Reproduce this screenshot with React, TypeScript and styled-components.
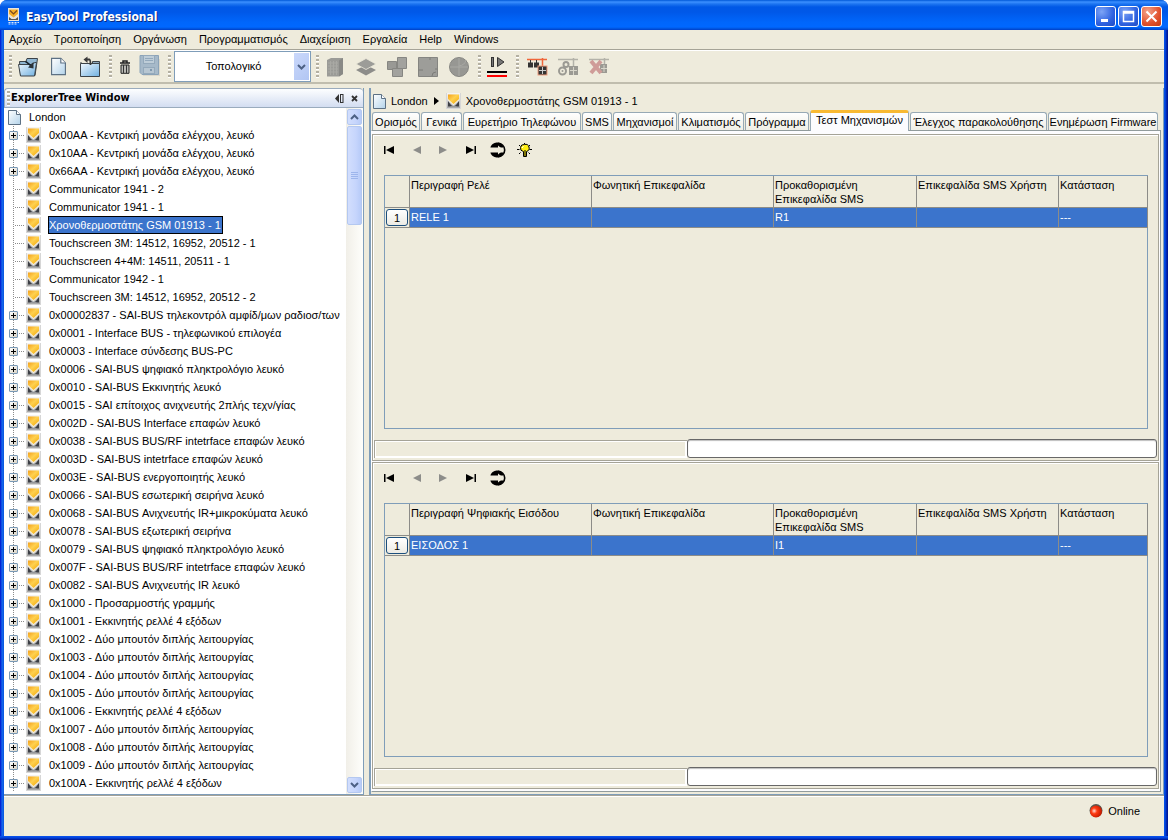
import React from "react";
import styled, { createGlobalStyle, css } from "styled-components";

const beige = "#eeebdc";
const line = "#a5a397";
const steel = "#7f9db9";
const select = "#3b74cc";

const GlobalStyle = createGlobalStyle`
  * { box-sizing: border-box; }
  body {
    margin: 0;
    background: #fff;
    color: #000;
    font: 11px/14px "Liberation Sans", Arial, sans-serif;
  }
  button, select { font: inherit; color: inherit; padding: 0; border: 0; background: none; }
  svg { display: block; flex: none; }
`;

/* ---------- window frame ---------- */

const Window = styled.div`
  height: 100vh;
  min-height: 480px;
  display: flex;
  flex-direction: column;
  border-radius: 7px 7px 0 0;
  overflow: hidden;
  background: linear-gradient(90deg, #0019cf 0, #0831d9 1px, #166aee 2px, #0855dd 4px, #0855dd calc(100% - 4px), #0148e8 calc(100% - 3px), #001ea0 calc(100% - 1px), #00138c 100%);
`;

const TitleBar = styled.header`
  height: 30px;
  flex: none;
  display: flex;
  align-items: center;
  gap: 6px;
  padding: 3px 6px 0 7px;
  background: linear-gradient(180deg, #0058d8 0, #3c90ff 2px, #1c74f0 4px, #0058e6 7px, #0058e8 12px, #0066fb 22px, #0068ff 27px, #0050d8 29px, #003dc8 30px);
`;

const Title = styled.h1`
  margin: 0;
  flex: 1;
  font: bold 12px/20px "DejaVu Sans Condensed", sans-serif;
  color: #fff;
  text-shadow: 1px 1px 0 #0a2a80;
`;

const CaptionButtons = styled.div`
  display: flex;
  gap: 2px;
`;

const CaptionButton = styled.button<{ $close?: boolean }>`
  width: 21px;
  height: 21px;
  border: 1px solid #fff;
  border-radius: 3px;
  display: grid;
  place-items: center;
  background: ${(p) =>
    p.$close
      ? "radial-gradient(circle at 30% 25%, #f2a48c, #e2512c 60%, #c43c14)"
      : "radial-gradient(circle at 30% 25%, #7da4f6, #2f62e0 60%, #1f4bc4)"};
`;

const Client = styled.div`
  flex: 1;
  min-height: 0;
  margin: 0 4px;
  display: flex;
  flex-direction: column;
  background: ${beige};
`;

const FrameBottom = styled.div`
  height: 4px;
  flex: none;
  background: linear-gradient(180deg, #0a55f0, #0040d8 50%, #00138c);
`;

/* ---------- menu and toolbar ---------- */

const MenuBar = styled.nav`
  height: 20px;
  flex: none;
  display: flex;
  align-items: center;
  gap: 12px;
  padding: 0 0 2px 5px;
  border-bottom: 1px solid ${line};
`;

const MenuItem = styled.button`
  line-height: 16px;
  white-space: nowrap;
`;

const ToolBar = styled.div`
  height: 34px;
  flex: none;
  display: flex;
  align-items: center;
  padding-left: 1px;
  border-top: 1px solid #fff;
  border-bottom: 2px solid #c0bdae;
`;

const Grip = styled.span`
  width: 3px;
  height: 23px;
  flex: none;
  margin-left: 4px;
  background: repeating-linear-gradient(180deg, #b4b0a2 0, #b4b0a2 2px, #fff 2px, #fff 3px, transparent 3px, transparent 4px);
`;

const ToolButton = styled.button<{ $narrow?: boolean }>`
  width: ${(p) => (p.$narrow ? 25 : 31)}px;
  height: 30px;
  display: grid;
  place-items: center;
`;

const Spacer = styled.span`
  width: 2px;
`;

const Combo = styled.div`
  position: relative;
  width: 137px;
  height: 31px;
  margin: 0 1px 0 3px;

  select {
    width: 100%;
    height: 100%;
    appearance: none;
    padding: 0 18px 2px 0;
    text-align: center;
    text-align-last: center;
    background: #fff;
    border: 1px solid ${steel};
  }
`;

const ComboArrow = styled.span`
  position: absolute;
  inset: 2px 2px 2px auto;
  width: 15px;
  display: grid;
  place-items: center;
  pointer-events: none;
  background: linear-gradient(135deg, #cad8fb, #b2c6f3);
`;

/* ---------- explorer ---------- */

const Body = styled.div`
  flex: 1;
  min-height: 0;
  display: flex;
  gap: 5px;
  padding-top: 4px;
`;

const Explorer = styled.aside`
  width: 360px;
  flex: none;
  display: flex;
  flex-direction: column;
  border: solid ${steel};
  border-width: 0 1px 1px 0;
`;

const ExplorerHeader = styled.div`
  height: 20px;
  flex: none;
  display: flex;
  align-items: center;
  padding: 0 1px 0 2px;
  border: solid #9aabbd;
  border-width: 1px 0 1px 1px;
  border-radius: 4px 4px 0 0;
  background: linear-gradient(180deg, #fdfeff, #d3ddf1);
`;

const HeaderGrip = styled(Grip)`
  height: 15px;
  margin: 0 1px 0 0;
`;

const ExplorerTitle = styled.h2`
  margin: 0;
  flex: 1;
  font: bold 11px/14px "DejaVu Sans Condensed", sans-serif;
`;

const HeaderButton = styled.button`
  width: 15px;
  height: 16px;
  display: grid;
  place-items: center;
`;

const TreeArea = styled.div`
  flex: 1;
  min-height: 0;
  display: flex;
  background: #fff;
`;

const Tree = styled.ul`
  flex: 1;
  min-width: 0;
  margin: 0;
  padding: 0;
  list-style: none;
  overflow: hidden;
`;

const RootRow = styled.li`
  height: 18px;
  display: flex;
  align-items: center;
  gap: 8px;
  padding-left: 4px;
`;

const TreeRow = styled.li`
  height: 18px;
  display: flex;
  align-items: center;
  padding-left: 5px;
  background: repeating-linear-gradient(180deg, #8c8c8c 0 1px, transparent 1px 2px) 9px 0 / 1px 100% no-repeat;
`;

const Expander = styled.button`
  width: 9px;
  height: 9px;
  flex: none;
  border: 1px solid #7898b5;
  border-radius: 1px;
  background:
    linear-gradient(#000, #000) center / 5px 1px no-repeat,
    linear-gradient(#000, #000) center / 1px 5px no-repeat,
    linear-gradient(135deg, #fff, #d8d2c4);
`;

const Branch = styled.span<{ $long?: boolean }>`
  width: ${(p) => (p.$long ? 10 : 6)}px;
  margin-left: ${(p) => (p.$long ? 5 : 0)}px;
  margin-right: 2px;
  height: 1px;
  flex: none;
  background: repeating-linear-gradient(90deg, transparent 0 1px, #8c8c8c 1px 2px);
`;

const NodeLabel = styled.span<{ $selected?: boolean }>`
  margin-left: 7px;
  padding: 1px 1px 1px 0;
  border: 1px solid transparent;
  white-space: nowrap;
  ${(p) =>
    p.$selected &&
    css`
      color: #fff;
      background: ${select};
      border-color: #000;
    `}
`;

const ScrollBar = styled.div`
  width: 17px;
  flex: none;
  display: flex;
  flex-direction: column;
  gap: 1px;
  padding: 1px;
  background: linear-gradient(90deg, #f1efe8, #fefefb);
`;

const ScrollPart = styled.button<{ $thumb?: boolean }>`
  height: ${(p) => (p.$thumb ? 99 : 16)}px;
  flex: none;
  display: grid;
  place-items: center;
  border: 1px solid #b4c8f0;
  border-radius: 2px;
  background: linear-gradient(90deg, #d2defd, #c6d5fc 60%, #b7cbf8);
`;

const ScrollTrack = styled.div`
  flex: 1;
`;

/* ---------- detail area ---------- */

const Detail = styled.main`
  flex: 1;
  min-width: 0;
  display: flex;
  flex-direction: column;
  padding: 4px 2px 2px 0;
  border: solid ${steel};
  border-width: 0 1px 1px 2px;
`;

const Breadcrumb = styled.div`
  height: 18px;
  flex: none;
  display: flex;
  align-items: center;
  gap: 5px;
  padding-left: 2px;
`;

const CrumbArrow = styled.span`
  width: 8px;
  display: grid;
  place-items: center;
`;

const Tabs = styled.div`
  height: 20px;
  flex: none;
  display: grid;
  grid-template-columns: 48fr 41fr 118fr 30fr 64fr 66fr 64fr 99fr 137fr 110fr;
  column-gap: 1px;
  align-items: end;
  padding: 0 3px 0 1px;
`;

const Tab = styled.button<{ $active?: boolean }>`
  height: 18px;
  min-width: 0;
  white-space: nowrap;
  display: flex;
  justify-content: center;
  align-items: center;
  border: 1px solid #97a9b5;
  border-bottom: 0;
  border-radius: 3px 3px 0 0;
  background: linear-gradient(180deg, #fff, #f1f0e8 90%);
  ${(p) =>
    p.$active &&
    css`
      height: 21px;
      margin-bottom: -1px;
      align-items: flex-start;
      border-top: 3px solid #f8b932;
      background: #fcfcfe;
      z-index: 1;
    `}
`;

const TabPane = styled.div`
  flex: 1;
  min-height: 0;
  display: flex;
  flex-direction: column;
  gap: 1px;
  padding: 3px 1px 2px 0;
  border: 1px solid #919b9c;
  border-left-color: #fff;
  background: #fcfcfe;
`;

const Panel = styled.section`
  flex: 1;
  min-height: 0;
  display: flex;
  flex-direction: column;
  padding: 0 1px 2px 1px;
  border: 1px solid ${line};
  background: ${beige};
  box-shadow: inset 1px 1px 0 #fff;
`;

const NavBar = styled.div`
  height: 31px;
  flex: none;
  display: flex;
  align-items: center;
  padding: 0 0 1px 2px;
`;

const NavButton = styled.button`
  width: 27px;
  height: 24px;
  display: grid;
  place-items: center;
`;

const GridFrame = styled.div`
  flex: 1;
  min-height: 0;
  margin: 9px 9px 10px 10px;
  border: 1px solid ${steel};
`;

const Grid = styled.table`
  width: 100%;
  table-layout: fixed;
  border-spacing: 0;

  th, td {
    border: solid #8c8c88;
    border-width: 0 1px 1px 0;
    text-align: left;
    vertical-align: top;
    font-weight: normal;
    overflow: hidden;
  }
  th { height: 32px; padding: 2px 1px 1px; }
  td { height: 20px; padding: 2px 1px; color: #fff; background: ${select}; }
`;

const NumberCell = styled.th`
  && { height: 20px; padding: 0 1px; }
`;

const RowButton = styled.button`
  display: block;
  width: 22px;
  height: 17px;
  margin-top: 1px;
  border: 1px solid #1d4f7d;
  border-radius: 3px;
  background: linear-gradient(180deg, #fff, #ecebe4);
`;

const Strip = styled.div`
  height: 19px;
  flex: none;
  display: flex;
`;

const Message = styled.div`
  flex: 2;
  margin: 1px 0 0 0;
  border: 1px solid ${line};
  border-right: 0;
  border-bottom: 0;
  box-shadow: inset 1px 1px 0 #fff, inset -2px -2px 0 #fff;
`;

const Progress = styled.div`
  flex: 3;
  border: 1px solid #686868;
  border-radius: 3px;
  background: #fff;
  box-shadow: inset 0 1px 1px #bebebe;
`;

const StatusBar = styled.footer`
  height: 41px;
  flex: none;
  display: flex;
  justify-content: flex-end;
  gap: 5px;
  padding: 8px 24px 0 0;
  border-top: 1px solid ${line};
  box-shadow: inset 0 1px 0 #fff;
`;

/* ---------- icons ---------- */

const Defs = styled.svg`
  position: absolute;
`;

const SharedGradients = () => (
  <Defs width="0" height="0" aria-hidden="true">
    <defs>
      <linearGradient id="steelFace" x1="0" y1="0" x2="0" y2="1">
        <stop offset="0" stopColor="#f6f6f6" />
        <stop offset="1" stopColor="#a6a6a6" />
      </linearGradient>
      <linearGradient id="amber" x1="0" y1="0" x2="1" y2="1">
        <stop offset="0" stopColor="#f3a01c" />
        <stop offset=".45" stopColor="#ffd150" />
        <stop offset="1" stopColor="#f2a400" />
      </linearGradient>
      <linearGradient id="paper" x1="0" y1="0" x2="1" y2="1">
        <stop offset="0" stopColor="#ffffff" />
        <stop offset="1" stopColor="#b3d3ea" />
      </linearGradient>
      <linearGradient id="folder" x1="0" y1="0" x2="1" y2="1">
        <stop offset="0" stopColor="#f2f9ff" />
        <stop offset="1" stopColor="#6fb0e0" />
      </linearGradient>
      <radialGradient id="redBall" cx=".35" cy=".45" r=".6">
        <stop offset="0" stopColor="#ffe0d8" />
        <stop offset=".4" stopColor="#ff3c14" />
        <stop offset="1" stopColor="#c81c00" />
      </radialGradient>
    </defs>
  </Defs>
);

const DeviceIcon = () => (
  <svg width="15" height="16" viewBox="0 0 15 16">
    <rect width="15" height="16" fill="#d6d6d6" />
    <rect x="1" width="13" height="15" fill="url(#steelFace)" />
    <path d="M2 8 5 12H10L13 8V13.500H2Z" fill="#3c3e44" />
    <path d="M4 13.500 7.500 11.500 11 13.500Z" fill="#b4b6ba" />
    <path d="M1.500 1H13.500V7L7.500 12.500 1.500 7Z" fill="#f3eee2" />
    <path d="M2 1.500H13V6L7.500 11 2 6Z" fill="url(#amber)" />
  </svg>
);

const PageIcon = ({ w = 13, h = 15 }: { w?: number; h?: number }) => (
  <svg width={w} height={h} viewBox="0 0 13 15">
    <path d="M.5 .5H8.500L12.500 4.500V14.500H.5Z" fill="url(#paper)" stroke="#5d7184" />
    <path d="M8.500 .5V4.500H12.500" fill="#fff" stroke="#5d7184" />
  </svg>
);

const AppIcon = () => (
  <svg width="13" height="17" viewBox="0 0 13 17">
    <rect x="1" y="0" width="11" height="13" fill="#e8e4dc" />
    <path d="M2 2.500V1.500H11V6L6.500 9.500 2 6Z" fill="#f6b02a" />
    <path d="M3 2.500 6.500 6 10 2.500" fill="none" stroke="#7a4a20" strokeWidth="1.200" />
    <path d="M2 12V9L4.500 11H8.500L11 9V12Z" fill="#555" />
    <path d="M1.500 14.500H12M1.500 16H10" stroke="#dfe8fa" strokeWidth="1.200" strokeDasharray="2 1" />
  </svg>
);

const FolderOpenIcon = () => (
  <svg width="22" height="22" viewBox="0 0 22 22">
    <path d="M2.500 5.500H9L10 2.500H20.500L18 19.500H3.500Z" fill="#8fb6d2" stroke="#3c4348" />
    <path d="M1.500 8.500H14L18 6.500H19.500L17.500 20H3.500Z" fill="url(#folder)" stroke="#3c4348" />
    <path d="M8.500 5.500C11 7 12 8.500 14 9.500" fill="none" stroke="#18242e" strokeWidth="1.600" />
    <path d="M16.500 6V12.500L11 11.500Z" fill="#2b3338" />
  </svg>
);

const FolderMoveIcon = () => (
  <svg width="22" height="22" viewBox="0 0 22 22">
    <path d="M13.500 7.500V5.500H20.500V9H13.500Z" fill="#8fa9bc" stroke="#3c4348" />
    <path d="M1.500 7.500H20.500V20.500H1.500Z" fill="url(#folder)" stroke="#3c4348" />
    <path d="M2 7.500V6" stroke="#3c4348" />
    <path d="M7 3.500H10.500Q11.500 4 11.500 9" fill="none" stroke="#3a3a3a" strokeWidth="1.800" />
    <path d="M8.500 .5V7L4.500 3.500Z" fill="#3a3a3a" />
  </svg>
);

const TrashIcon = () => (
  <svg width="12" height="14" viewBox="0 0 12 14">
    <path d="M1 3H11M4 2.500V1H8V2.500" fill="none" stroke="#222" strokeWidth="1.500" />
    <path d="M2 5H10V13.300H2Z" fill="#b9b9b4" stroke="#222" />
    <path d="M4.500 5V13M7.500 5V13" stroke="#333" />
  </svg>
);

const FloppyIcon = () => (
  <svg width="22" height="24" viewBox="0 0 22 24">
    <rect x="4" y="4" width="17" height="17" fill="#dbd8cc" />
    <path d="M1 .5H19.500V19.500H3L1 17.500Z" fill="#a6b9c9" stroke="#8ba3b8" />
    <rect x="4.500" y=".5" width="11" height="8" fill="#becdd8" stroke="#94a9bb" />
    <path d="M6 3.500H14M6 5.500H14" stroke="#93a9bc" />
    <rect x="4.500" y="12.500" width="11" height="6" fill="#b7c6d2" stroke="#94a9bb" />
    <rect x="11" y="14" width="2" height="2" fill="#7f98ae" />
  </svg>
);

const BuildingIcon = () => (
  <svg width="18" height="20" viewBox="0 0 18 20">
    <path d="M1 3 5 1H17V17L13 19.500H1Z" fill="#9b9b97" />
    <path d="M13 3.500 17 1V17L13 19.500Z" fill="#898986" />
    <path d="M2 6H12M2 9H12M2 12H12M2 15H12M4.500 4V18M7.500 4V18M10.500 4V18" stroke="#a9a9a4" />
  </svg>
);

const LayersIcon = () => (
  <svg width="20" height="18" viewBox="0 0 20 18">
    <path d="M10 7 20 12 10 17.500 0 12Z" fill="#8d8d8a" />
    <path d="M10 .5 20 6 10 11.500 0 6Z" fill="#9c9c98" stroke="#eeebdc" strokeWidth=".8" />
  </svg>
);

const BlocksIcon = () => (
  <svg width="20" height="20" viewBox="0 0 20 20">
    <path d="M.5 4.500H9.500V12.500H.5Z" fill="#999995" stroke="#868682" />
    <path d="M10.500 .5H19.500V11.500H10.500Z" fill="#a2a29e" stroke="#868682" />
    <path d="M5.500 11.500H15.500V19.500H5.500Z" fill="#a2a29e" stroke="#868682" />
  </svg>
);

const PlanIcon = () => (
  <svg width="20" height="20" viewBox="0 0 20 20">
    <path d="M.5 .5H19.500V19.500H.5Z" fill="#9d9d99" stroke="#858581" />
    <path d="M12 .5V3M.5 13H5M17 12H19.500M14 19Q14 15 18 15" fill="none" stroke="#7c7c78" />
  </svg>
);

const GlobeIcon = () => (
  <svg width="20" height="20" viewBox="0 0 20 20">
    <circle cx="10" cy="10" r="9.500" fill="#979793" stroke="#868682" />
    <path d="M10 1V19M1 10H19M10 9Q16 8 17 3" fill="none" stroke="#a9a9a4" />
  </svg>
);

const RunIcon = () => (
  <svg width="22" height="22" viewBox="0 0 22 22">
    <rect x="5.500" y="1.500" width="2" height="9" fill="#777" stroke="#333" />
    <path d="M11.500 1.500 18 6 11.500 10.500Z" fill="#777" stroke="#333" />
    <rect x="1" y="15" width="20" height="2" fill="#000" />
    <rect x="1" y="19" width="20" height="2" fill="#f00" />
  </svg>
);

const NetIcon = () => (
  <svg width="22" height="20" viewBox="0 0 22 20">
    <path d="M1 2.500H21M16.500 1V10" stroke="#f0663a" strokeWidth="1.500" />
    <path d="M4.500 3V7M10.500 3V7" stroke="#333" />
    <rect x="2" y="5.500" width="5" height="5" fill="#333" />
    <rect x="8" y="5.500" width="5" height="5" fill="#333" />
    <rect x="12" y="9" width="9" height="9" fill="#333" stroke="#f0a080" />
    <path d="M16.500 10V17M13 13.500H20" stroke="#ccc" />
  </svg>
);

const NetConfigIcon = () => (
  <svg width="22" height="20" viewBox="0 0 22 20">
    <path d="M1 2.500H21M16.500 1V10" stroke="#b3b2a9" strokeWidth="1.500" />
    <circle cx="9" cy="7.500" r="2.500" fill="none" stroke="#9b9a93" strokeWidth="2" />
    <circle cx="5.500" cy="14" r="3.500" fill="none" stroke="#9b9a93" strokeWidth="2" />
    <circle cx="5.500" cy="14" r="1" fill="#9b9a93" />
    <rect x="12" y="9" width="9" height="9" fill="#9b9a93" />
    <path d="M16.500 10V18M13 13.500H20" stroke="#d8d6ca" />
  </svg>
);

const NetRemoveIcon = () => (
  <svg width="22" height="20" viewBox="0 0 22 20">
    <path d="M1 2.500H21M16.500 1V10" stroke="#b3b2a9" strokeWidth="1.500" />
    <rect x="12" y="7" width="7" height="9" fill="#9b9a93" />
    <path d="M16 8V15M13 11.500H19" stroke="#d8d6ca" />
    <path d="M3 4 13 16M13 4 3 16" stroke="#cf9c98" strokeWidth="4" />
  </svg>
);

const Chevron = ({ up }: { up?: boolean }) => (
  <svg width="9" height="6" viewBox="0 0 9 6">
    <path d={up ? "M1 5 4.500 1.500 8 5" : "M1 1 4.500 4.500 8 1"} fill="none" stroke="#4d6185" strokeWidth="2" />
  </svg>
);

const ThumbLines = () => (
  <svg width="7" height="8" viewBox="0 0 7 8">
    <path d="M0 .5H7M0 2.500H7M0 4.500H7M0 6.500H7" stroke="#9db5ec" />
  </svg>
);

const StepIcon = ({ kind }: { kind: "first" | "prev" | "next" | "last" }) => {
  const muted = kind === "prev" || kind === "next";
  const fill = muted ? "#8d8d8a" : "#000";
  const left = kind === "first" || kind === "prev";
  return (
    <svg width="11" height="8" viewBox="0 0 11 8">
      <path d={left ? "M10 0V8L2 4Z" : "M1 0V8L9 4Z"} fill={fill} />
      {!muted && <rect x={left ? 0 : 9.500} y="0" width="1.500" height="8" fill={fill} />}
    </svg>
  );
};

/* Two solid caps joined on the right by a thin ring, with an arrow-shaped gap between them. */
const RefreshIcon = () => (
  <svg width="16" height="16" viewBox="0 0 16 16">
    <path d="M.5 5C2 1.500 5 .5 7.500 .5S12 2 13 4V5.500H.5Z" fill="#000" />
    <path d="M.5 11C2 14.500 5 15.500 7.500 15.500S12 14 13 12V10.500H.5Z" fill="#000" />
    <path d="M8 1.300A6.700 6.700 0 0 1 8 14.700" fill="none" stroke="#000" strokeWidth="1.600" />
    <path d="M0 6H8V3.500L13.500 8 8 12.500V10H0Z" fill="#eeebdc" />
  </svg>
);

const BulbIcon = () => (
  <svg width="15" height="15" viewBox="0 0 15 15">
    <path d="M7.500 0V1M2 2 3.500 3.500M13 2 11.500 3.500M0 6.500H2.500M15 6.500H12.500M2 11 3.500 9.500M13 11 11.500 9.500" stroke="#000" />
    <path d="M7.500 1.500A3.500 3.500 0 0 1 9.500 8.500V13.500H6.500V8.500A3.500 3.500 0 0 1 7.500 1.500Z" fill="#ffee10" stroke="#000" />
    <path d="M6.500 3 5 5" stroke="#fff" />
    <path d="M8 7V11M6.500 12H9.500" stroke="#000" />
  </svg>
);

/* ---------- data ---------- */

const menus = ["Αρχείο", "Τροποποίηση", "Οργάνωση", "Προγραμματισμός", "Διαχείριση", "Εργαλεία", "Help", "Windows"];

const tabs = [
  "Ορισμός", "Γενικά", "Ευρετήριο Τηλεφώνου", "SMS", "Μηχανισμοί", "Κλιματισμός",
  "Πρόγραμμα", "Τεστ Μηχανισμών", "Έλεγχος παρακολούθησης", "Ενημέρωση Firmware",
];

const current = "Χρονοθερμοστάτης GSM 01913 - 1";

const nodes: { label: string; leaf?: boolean }[] = [
  { label: "0x00AA - Κεντρική μονάδα ελέγχου, λευκό" },
  { label: "0x10AA - Κεντρική μονάδα ελέγχου, λευκό" },
  { label: "0x66AA - Κεντρική μονάδα ελέγχου, λευκό" },
  { label: "Communicator 1941 - 2", leaf: true },
  { label: "Communicator 1941 - 1", leaf: true },
  { label: current, leaf: true },
  { label: "Touchscreen 3M: 14512, 16952, 20512 - 1", leaf: true },
  { label: "Touchscreen 4+4M: 14511, 20511 - 1", leaf: true },
  { label: "Communicator 1942 - 1", leaf: true },
  { label: "Touchscreen 3M: 14512, 16952, 20512 - 2", leaf: true },
  { label: "0x00002837 - SAI-BUS τηλεκοντρόλ αμφίδ/μων ραδιοσ/των" },
  { label: "0x0001 - Interface BUS - τηλεφωνικού επιλογέα" },
  { label: "0x0003 - Interface σύνδεσης BUS-PC" },
  { label: "0x0006 - SAI-BUS ψηφιακό πληκτρολόγιο λευκό" },
  { label: "0x0010 - SAI-BUS Εκκινητής λευκό" },
  { label: "0x0015 - SAI επίτοιχος ανιχνευτής 2πλής τεχν/γίας" },
  { label: "0x002D - SAI-BUS Interface επαφών λευκό" },
  { label: "0x0038 - SAI-BUS BUS/RF intetrface επαφών λευκό" },
  { label: "0x003D - SAI-BUS intetrface επαφών λευκό" },
  { label: "0x003E - SAI-BUS ενεργοποιητής λευκό" },
  { label: "0x0066 - SAI-BUS εσωτερική σειρήνα λευκό" },
  { label: "0x0068 - SAI-BUS Ανιχνευτής IR+μικροκύματα λευκό" },
  { label: "0x0078 - SAI-BUS εξωτερική σειρήνα" },
  { label: "0x0079 - SAI-BUS ψηφιακό πληκτρολόγιο λευκό" },
  { label: "0x007F - SAI-BUS BUS/RF intetrface επαφών λευκό" },
  { label: "0x0082 - SAI-BUS Ανιχνευτής IR λευκό" },
  { label: "0x1000 - Προσαρμοστής γραμμής" },
  { label: "0x1001 - Εκκινητής ρελλέ 4 εξόδων" },
  { label: "0x1002 - Δύο μπουτόν διπλής λειτουργίας" },
  { label: "0x1003 - Δύο μπουτόν διπλής λειτουργίας" },
  { label: "0x1004 - Δύο μπουτόν διπλής λειτουργίας" },
  { label: "0x1005 - Δύο μπουτόν διπλής λειτουργίας" },
  { label: "0x1006 - Εκκινητής ρελλέ 4 εξόδων" },
  { label: "0x1007 - Δύο μπουτόν διπλής λειτουργίας" },
  { label: "0x1008 - Δύο μπουτόν διπλής λειτουργίας" },
  { label: "0x1009 - Δύο μπουτόν διπλής λειτουργίας" },
  { label: "0x100A - Εκκινητής ρελλέ 4 εξόδων" },
];

const TestPanel = ({ title, name, code, lamp }: { title: string; name: string; code: string; lamp?: boolean }) => (
  <Panel aria-label={title}>
    <NavBar>
      <NavButton aria-label="First"><StepIcon kind="first" /></NavButton>
      <NavButton aria-label="Previous"><StepIcon kind="prev" /></NavButton>
      <NavButton aria-label="Next"><StepIcon kind="next" /></NavButton>
      <NavButton aria-label="Last"><StepIcon kind="last" /></NavButton>
      <NavButton aria-label="Refresh"><RefreshIcon /></NavButton>
      {lamp && <NavButton aria-label="Test"><BulbIcon /></NavButton>}
    </NavBar>
    <GridFrame>
      <Grid>
        <colgroup>
          <col style={{ width: 25 }} />
          <col style={{ width: 182 }} />
          <col style={{ width: 182 }} />
          <col style={{ width: 143 }} />
          <col style={{ width: 142 }} />
          <col style={{ width: 89 }} />
        </colgroup>
        <thead>
          <tr>
            <th aria-label="Row" />
            <th scope="col">{title}</th>
            <th scope="col">Φωνητική Επικεφαλίδα</th>
            <th scope="col">Προκαθορισμένη Επικεφαλίδα SMS</th>
            <th scope="col">Επικεφαλίδα SMS Χρήστη</th>
            <th scope="col">Κατάσταση</th>
          </tr>
        </thead>
        <tbody>
          <tr>
            <NumberCell scope="row"><RowButton>1</RowButton></NumberCell>
            <td>{name}</td>
            <td />
            <td>{code}</td>
            <td />
            <td>---</td>
          </tr>
        </tbody>
      </Grid>
    </GridFrame>
    <Strip>
      <Message role="status" />
      <Progress role="progressbar" aria-label={title} aria-valuenow={0} />
    </Strip>
  </Panel>
);

export default function App() {
  return (
    <>
      <GlobalStyle />
      <SharedGradients />
      <Window>
        <TitleBar>
          <AppIcon />
          <Title>EasyTool Professional</Title>
          <CaptionButtons>
            <CaptionButton aria-label="Minimize">
              <svg width="13" height="13" viewBox="0 0 13 13"><rect x="2" y="9" width="7" height="3" fill="#fff" /></svg>
            </CaptionButton>
            <CaptionButton aria-label="Maximize">
              <svg width="13" height="13" viewBox="0 0 13 13"><path d="M1.500 1.500H11.500V11.500H1.500ZM1 3H12" fill="none" stroke="#fff" strokeWidth="1.500" /></svg>
            </CaptionButton>
            <CaptionButton $close aria-label="Close">
              <svg width="13" height="13" viewBox="0 0 13 13"><path d="M1.500 1.500 11.500 11.500M11.500 1.500 1.500 11.500" stroke="#fff" strokeWidth="2" /></svg>
            </CaptionButton>
          </CaptionButtons>
        </TitleBar>

        <Client>
          <MenuBar>
            {menus.map((m) => <MenuItem key={m}>{m}</MenuItem>)}
          </MenuBar>

          <ToolBar>
            <Grip />
            <ToolButton aria-label="Open project"><FolderOpenIcon /></ToolButton>
            <ToolButton aria-label="New"><PageIcon w={15} h={19} /></ToolButton>
            <ToolButton aria-label="Import"><FolderMoveIcon /></ToolButton>
            <Grip />
            <ToolButton $narrow aria-label="Delete"><TrashIcon /></ToolButton>
            <ToolButton $narrow aria-label="Save"><FloppyIcon /></ToolButton>
            <Spacer />
            <Grip />
            <Combo>
              <select aria-label="Προβολή" defaultValue="Τοπολογικό">
                <option>Τοπολογικό</option>
              </select>
              <ComboArrow><Chevron /></ComboArrow>
            </Combo>
            <Grip />
            <ToolButton aria-label="Building"><BuildingIcon /></ToolButton>
            <ToolButton aria-label="Floors"><LayersIcon /></ToolButton>
            <ToolButton aria-label="Areas"><BlocksIcon /></ToolButton>
            <ToolButton aria-label="Plan"><PlanIcon /></ToolButton>
            <ToolButton aria-label="Global"><GlobeIcon /></ToolButton>
            <Grip />
            <ToolButton aria-label="Run"><RunIcon /></ToolButton>
            <Grip />
            <Spacer />
            <ToolButton aria-label="Network"><NetIcon /></ToolButton>
            <ToolButton aria-label="Configure network"><NetConfigIcon /></ToolButton>
            <ToolButton aria-label="Remove network"><NetRemoveIcon /></ToolButton>
          </ToolBar>

          <Body>
            <Explorer>
              <ExplorerHeader>
                <HeaderGrip />
                <ExplorerTitle>ExplorerTree Window</ExplorerTitle>
                <HeaderButton aria-label="Auto hide">
                  <svg width="9" height="9" viewBox="0 0 9 9"><path d="M4 0V9L0 4.500Z" fill="#333" /><rect x="5.500" y=".5" width="2.500" height="8" fill="none" stroke="#333" /></svg>
                </HeaderButton>
                <HeaderButton aria-label="Close panel">
                  <svg width="7" height="7" viewBox="0 0 7 7"><path d="M1 1 6 6M6 1 1 6" stroke="#333" strokeWidth="1.800" /></svg>
                </HeaderButton>
              </ExplorerHeader>
              <TreeArea>
                <Tree role="tree">
                  <RootRow role="treeitem"><PageIcon />London</RootRow>
                  {nodes.map((n) => (
                    <TreeRow key={n.label} role="treeitem" aria-selected={n.label === current}>
                      {!n.leaf && <Expander aria-label="Expand" />}
                      <Branch $long={n.leaf} />
                      <DeviceIcon />
                      <NodeLabel $selected={n.label === current}>{n.label}</NodeLabel>
                    </TreeRow>
                  ))}
                </Tree>
                <ScrollBar>
                  <ScrollPart aria-label="Scroll up"><Chevron up /></ScrollPart>
                  <ScrollPart $thumb aria-label="Scroll position"><ThumbLines /></ScrollPart>
                  <ScrollTrack />
                  <ScrollPart aria-label="Scroll down"><Chevron /></ScrollPart>
                </ScrollBar>
              </TreeArea>
            </Explorer>

            <Detail>
              <Breadcrumb>
                <PageIcon />
                <span>London</span>
                <CrumbArrow><svg width="5" height="8" viewBox="0 0 5 8"><path d="M0 0V8L5 4Z" /></svg></CrumbArrow>
                <DeviceIcon />
                <span>{current}</span>
              </Breadcrumb>
              <Tabs role="tablist">
                {tabs.map((t) => (
                  <Tab key={t} role="tab" aria-selected={t === "Τεστ Μηχανισμών"} $active={t === "Τεστ Μηχανισμών"}>{t}</Tab>
                ))}
              </Tabs>
              <TabPane role="tabpanel">
                <TestPanel title="Περιγραφή Ρελέ" name="RELE 1" code="R1" lamp />
                <TestPanel title="Περιγραφή Ψηφιακής Εισόδου" name="ΕΙΣΟΔΟΣ 1" code="I1" />
              </TabPane>
            </Detail>
          </Body>

          <StatusBar>
            <svg width="14" height="14" viewBox="0 0 14 14">
              <circle cx="7" cy="6.500" r="6.500" fill="#5a5850" />
              <circle cx="7" cy="7.500" r="6" fill="url(#redBall)" />
            </svg>
            <span>Online</span>
          </StatusBar>
        </Client>
        <FrameBottom />
      </Window>
    </>
  );
}
